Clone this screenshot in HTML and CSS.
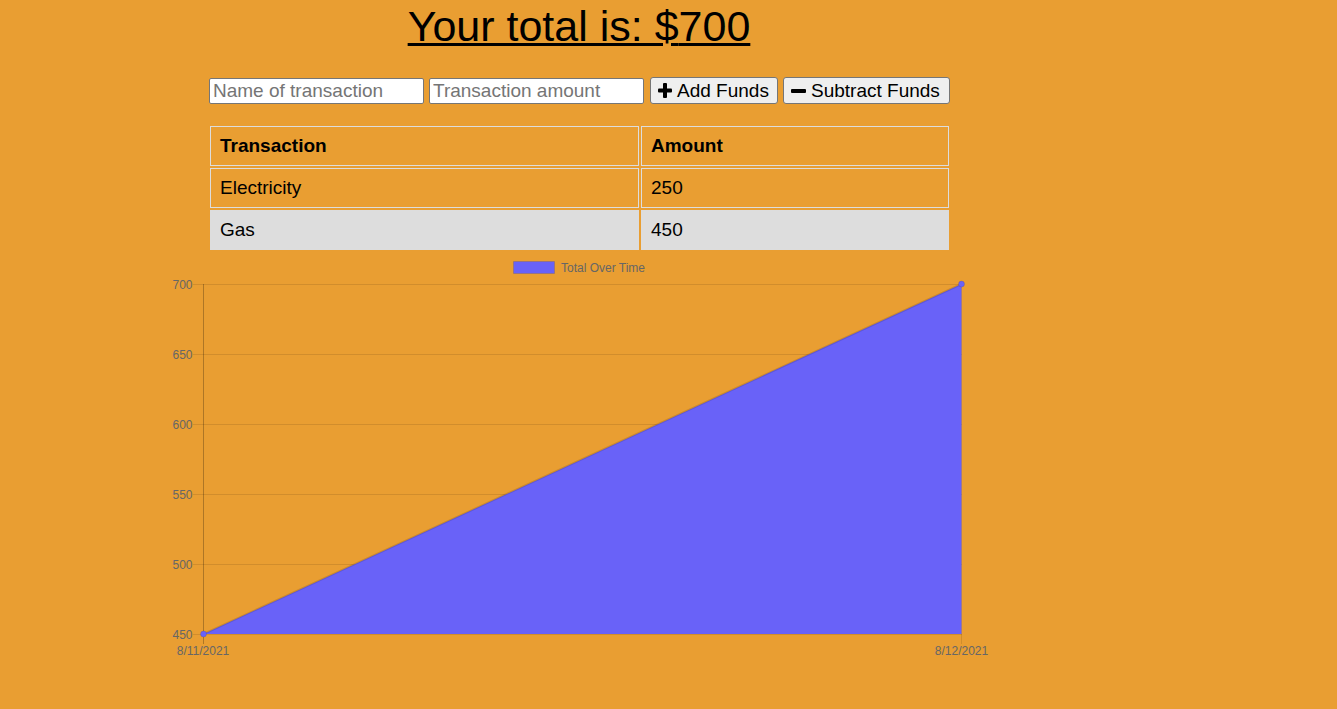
FILE: index.html
```html
<!DOCTYPE html>
<html>
<head>
<meta charset="utf-8">
<title>Budget Tracker</title>
<link rel="stylesheet" href="styles.css">
</head>
<body>
<div class="wrapper">
  <h1 class="total">Your total is: $<span>700</span></h1>
  <form class="form">
    <input class="field" type="text" placeholder="Name of transaction">
    <input class="field" type="number" placeholder="Transaction amount">
    <button class="btn btn-add" type="button">
      <svg class="icon" width="14" height="15" viewBox="0 0 14 15"><rect x="5" y="0" width="4" height="15" rx="1"/><rect x="0" y="5.5" width="14" height="4" rx="1"/></svg>
      <span>Add Funds</span>
    </button>
    <button class="btn btn-sub" type="button">
      <svg class="icon" width="15" height="14" viewBox="0 0 15 14"><rect x="0" y="5" width="15" height="4" rx="1"/></svg>
      <span>Subtract Funds</span>
    </button>
  </form>
  <table class="tx-table">
    <thead>
      <tr><th class="col-name">Transaction</th><th>Amount</th></tr>
    </thead>
    <tbody>
      <tr><td>Electricity</td><td>250</td></tr>
      <tr class="even"><td>Gas</td><td>450</td></tr>
    </tbody>
  </table>
  <svg class="chart" width="830" height="410" viewBox="0 0 830 410">
    <rect x="348.5" y="6.5" width="41" height="12" fill="#6962f8" stroke="rgba(0,0,0,0.1)" stroke-width="1"/>
    <text class="lbl" x="396" y="17">Total Over Time</text>
    <g stroke="rgba(0,0,0,0.1)" stroke-width="1">
      <line x1="28" y1="29.5" x2="797" y2="29.5"/>
      <line x1="28" y1="99.5" x2="797" y2="99.5"/>
      <line x1="28" y1="169.5" x2="797" y2="169.5"/>
      <line x1="28" y1="239.5" x2="797" y2="239.5"/>
      <line x1="28" y1="309.5" x2="797" y2="309.5"/>
      <line x1="28" y1="379.5" x2="797" y2="379.5"/>
      <line x1="796.5" y1="29" x2="796.5" y2="389"/>
    </g>
    <line x1="38.5" y1="29" x2="38.5" y2="389" stroke="rgba(0,0,0,0.25)" stroke-width="1"/>
    <g class="lbl" text-anchor="end">
      <text x="27.5" y="33.5">700</text>
      <text x="27.5" y="103.5">650</text>
      <text x="27.5" y="173.5">600</text>
      <text x="27.5" y="243.5">550</text>
      <text x="27.5" y="313.5">500</text>
      <text x="27.5" y="383.5">450</text>
    </g>
    <g class="lbl" text-anchor="middle">
      <text x="38" y="400">8/11/2021</text>
      <text x="796.5" y="400">8/12/2021</text>
    </g>
    <polygon points="38.5,379 796.5,29 796.5,379" fill="#6962f8"/>
    <line x1="38.5" y1="379" x2="796.5" y2="29" stroke="rgba(0,0,0,0.12)" stroke-width="2"/>
    <circle cx="38.5" cy="379" r="3" fill="#6962f8" stroke="rgba(0,0,0,0.1)"/>
    <circle cx="796.5" cy="29" r="3" fill="#6962f8" stroke="rgba(0,0,0,0.1)"/>
  </svg>
</div>
</body>
</html>
```

FILE: styles.css
```css
html, body {
  margin: 0;
  padding: 0;
}

body {
  background: #e99e32;
  font-family: "Liberation Sans", Arial, Helvetica, sans-serif;
  color: #000;
  min-height: 709px;
}

.wrapper {
  width: 830px;
  margin-left: 164px;
}

.total {
  margin: 2px 0 0;
  text-align: center;
  font-size: 43px;
  font-weight: normal;
  line-height: normal;
  text-decoration: underline;
  text-decoration-thickness: 3px;
}

.form {
  display: flex;
  align-items: flex-end;
  gap: 5px;
  margin: 26px 0 0 45px;
}

.field {
  box-sizing: border-box;
  width: 215px;
  height: 26px;
  margin: 0;
  padding: 0 3px;
  border: 1px solid #767676;
  border-radius: 2px;
  background: #fff;
  font-family: inherit;
  font-size: 19px;
  color: #000;
  -moz-appearance: textfield;
}

.field::placeholder {
  color: #757575;
}

.field::-webkit-outer-spin-button,
.field::-webkit-inner-spin-button {
  -webkit-appearance: none;
  margin: 0;
}

.btn {
  box-sizing: border-box;
  height: 27px;
  margin: 0;
  padding: 1px 0 0 7px;
  display: inline-flex;
  align-items: center;
  gap: 5px;
  border: 1px solid #767676;
  border-radius: 3px;
  background: #efefef;
  font-family: inherit;
  font-size: 19px;
  color: #000;
}

.btn-add {
  width: 128px;
  margin-left: 1px;
}

.btn-sub {
  width: 167px;
}

.icon {
  display: block;
  fill: #000;
  flex: none;
  margin-top: -1px;
}

.tx-table {
  margin: 20px 0 0 44px;
  width: 743px;
  table-layout: fixed;
  border-collapse: separate;
  border-spacing: 2px;
  font-size: 19px;
  text-align: left;
}

.tx-table th,
.tx-table td {
  padding: 9px 9px;
  line-height: 20px;
  border: 1px solid #dddddd;
}

.tx-table th {
  font-weight: bold;
}

.tx-table .col-name {
  width: 409px;
}

.tx-table .even td {
  background: #dddddd;
}

.chart {
  display: block;
  margin-top: 3px;
  margin-left: 1px;
}

.lbl {
  font-family: "Liberation Sans", Arial, Helvetica, sans-serif;
  font-size: 12px;
  fill: #666666;
}
```
